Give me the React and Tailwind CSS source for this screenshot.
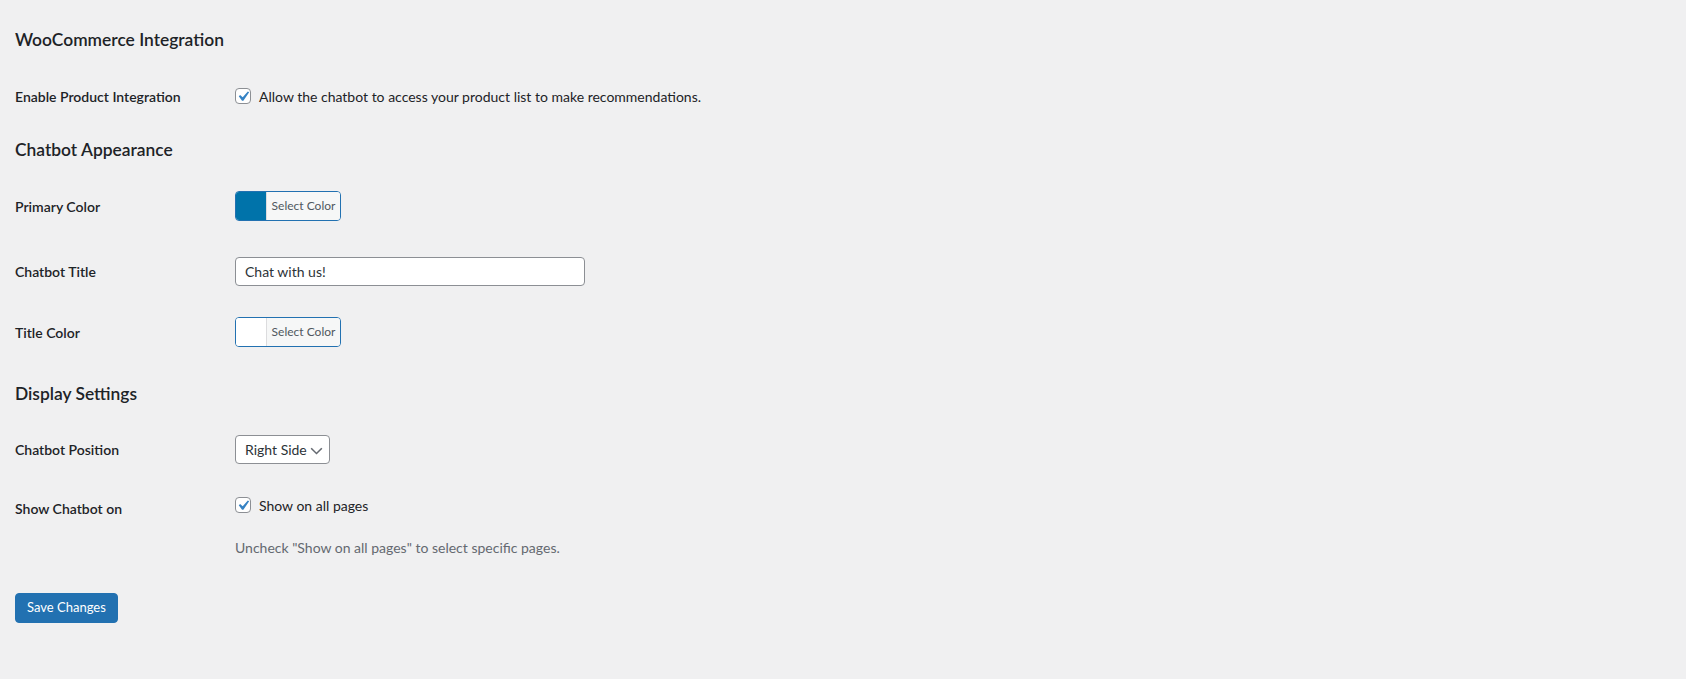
import React, { useState } from "react";

const font = { fontFamily: 'Lato, "Open Sans", sans-serif' };

function CheckBox({ checked, onChange }) {
  return (
    <button
      type="button"
      onClick={onChange}
      className="w-[16px] h-[16px] shrink-0 rounded-[4px] border border-[#8c8f94] bg-white flex items-center justify-center"
    >
      {checked && (
        <svg viewBox="0 0 20 20" className="w-[21px] h-[21px] -m-[3px]">
          <path fill="#3582c4" d="M14.83 4.89l1.34.94-5.81 8.38H9.02L5.78 9.67l1.34-1.25 2.57 2.4z" />
        </svg>
      )}
    </button>
  );
}

function ColorButton({ color }) {
  return (
    <button
      type="button"
      className="flex h-[30px] w-[106px] rounded-[4px] border border-[#2271b1] overflow-hidden bg-[#f6f7f7]"
    >
      <span className="w-[30px] h-full" style={{ background: color }} />
      <span className="flex-1 h-full flex items-center justify-center border-l border-[#dcdcde] bg-[#f6f7f7] text-[12px] text-[#50575e]">
        Select Color
      </span>
    </button>
  );
}

function Label({ children }) {
  return <div className="w-[220px] shrink-0 text-[14px] font-semibold text-[#1d2327]">{children}</div>;
}

function Heading({ children, className = "" }) {
  return <h2 className={"h-[24px] leading-[24px] text-[17.4px] font-semibold text-[#1d2327] " + className}>{children}</h2>;
}

export default function App() {
  const [products, setProducts] = useState(true);
  const [allPages, setAllPages] = useState(true);
  const [title, setTitle] = useState("Chat with us!");

  return (
    <div style={font} className="min-h-[679px] bg-[#f0f0f1] pl-[15px] pt-[28px] text-[#1d2327] text-[14px]">
      <Heading>WooCommerce Integration</Heading>

      <div className="mt-[29px] h-[30px] flex items-center">
        <Label>Enable Product Integration</Label>
        <label className="flex items-center gap-[8px] cursor-pointer">
          <CheckBox checked={products} onChange={() => setProducts(!products)} />
          <span>Allow the chatbot to access your product list to make recommendations.</span>
        </label>
      </div>

      <Heading className="mt-[27px]">Chatbot Appearance</Heading>

      <div className="mt-[29px] h-[30px] flex items-center">
        <Label>Primary Color</Label>
        <ColorButton color="#0073aa" />
      </div>

      <div className="mt-[36px] h-[29px] flex items-center">
        <Label>Chatbot Title</Label>
        <input
          value={title}
          onChange={(e) => setTitle(e.target.value)}
          className="w-[350px] h-[29px] px-[9px] rounded-[4px] border border-[#8c8f94] bg-white text-[14px] text-[#2c3338] outline-none"
        />
      </div>

      <div className="mt-[31px] h-[30px] flex items-center">
        <Label>Title Color</Label>
        <ColorButton color="#ffffff" />
      </div>

      <Heading className="mt-[35px]">Display Settings</Heading>

      <div className="mt-[29px] h-[29px] flex items-center">
        <Label>Chatbot Position</Label>
        <div className="h-[29px] w-[95px] rounded-[4px] border border-[#8c8f94] bg-white flex items-center justify-between pl-[9px] pr-[4px] text-[14px] text-[#2c3338] whitespace-nowrap">
          <span>Right Side</span>
          <svg viewBox="0 0 20 20" className="w-[19px] h-[19px] shrink-0 mt-[2px]">
            <path fill="#646970" d="M5 7l5 5 5-5 1.2 1.1L10 14.2 3.8 8.1z" />
          </svg>
        </div>
      </div>

      <div className="mt-[33px] flex items-start">
        <div className="pt-[2px] leading-[20px]">
          <Label>Show Chatbot on</Label>
        </div>
        <div>
          <label className="h-[16px] flex items-center gap-[8px] cursor-pointer">
            <CheckBox checked={allPages} onChange={() => setAllPages(!allPages)} />
            <span>Show on all pages</span>
          </label>
          <p className="mt-[25px] leading-[20px] text-[#646970]">Uncheck "Show on all pages" to select specific pages.</p>
        </div>
      </div>

      <button
        type="button"
        className="mt-[35px] h-[30px] px-[11px] rounded-[4px] bg-[#2271b1] border border-[#2271b1] text-white text-[13px]"
      >
        Save Changes
      </button>
    </div>
  );
}
